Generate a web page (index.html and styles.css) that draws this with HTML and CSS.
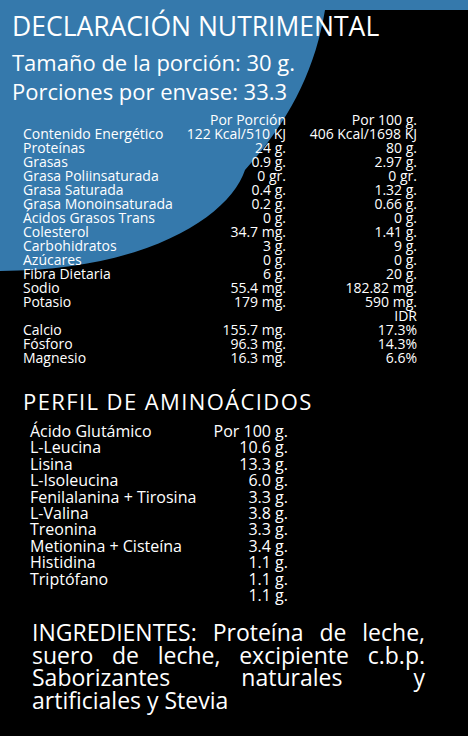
FILE: index.html
```html
<!DOCTYPE html>
<html lang="es">
<head>
  <meta charset="UTF-8">
  <meta name="viewport" content="width=device-width, initial-scale=1">
  <title>Declaración Nutrimental</title>
  <link rel="stylesheet" href="styles.css">
</head>
<body>
  <div class="label">
    <!-- blue corner shape behind the header -->
    <svg class="corner" width="468" height="280" viewBox="0 0 468 280">
      <path d="M0 0 H468 V10 H325 C315 70 290 120 245 170 C230 215 150 270 0 271 Z" fill="#3579ac"/>
    </svg>

    <div class="content">
      <h1>DECLARACIÓN NUTRIMENTAL</h1>
      <p class="serving">Tamaño de la porción: 30 g.</p>
      <p class="serving">Porciones por envase: 33.3</p>

      <div class="nutrients">
        <div class="row"><span></span><span>Por Porción</span><span>Por 100 g.</span></div>
        <div class="row"><span>Contenido Energético</span><span>122 Kcal/510 KJ</span><span>406 Kcal/1698 KJ</span></div>
        <div class="row"><span>Proteínas</span><span>24 g.</span><span>80 g.</span></div>
        <div class="row"><span>Grasas</span><span>0.9 g.</span><span>2.97 g.</span></div>
        <div class="row"><span>Grasa Poliinsaturada</span><span>0 gr.</span><span>0 gr.</span></div>
        <div class="row"><span>Grasa Saturada</span><span>0.4 g.</span><span>1.32 g.</span></div>
        <div class="row"><span>Grasa Monoinsaturada</span><span>0.2 g.</span><span>0.66 g.</span></div>
        <div class="row"><span>Ácidos Grasos Trans</span><span>0 g.</span><span>0 g.</span></div>
        <div class="row"><span>Colesterol</span><span>34.7 mg.</span><span>1.41 g.</span></div>
        <div class="row"><span>Carbohidratos</span><span>3 g.</span><span>9 g.</span></div>
        <div class="row"><span>Azúcares</span><span>0 g.</span><span>0 g.</span></div>
        <div class="row"><span>Fibra Dietaria</span><span>6 g.</span><span>20 g.</span></div>
        <div class="row"><span>Sodio</span><span>55.4 mg.</span><span>182.82 mg.</span></div>
        <div class="row"><span>Potasio</span><span>179 mg.</span><span>590 mg.</span></div>
        <div class="row"><span></span><span></span><span>IDR</span></div>
        <div class="row"><span>Calcio</span><span>155.7 mg.</span><span>17.3%</span></div>
        <div class="row"><span>Fósforo</span><span>96.3 mg.</span><span>14.3%</span></div>
        <div class="row"><span>Magnesio</span><span>16.3 mg.</span><span>6.6%</span></div>
      </div>

      <h2>PERFIL DE AMINOÁCIDOS</h2>
      <div class="amino">
        <div class="row"><span>Ácido Glutámico</span><span>Por 100 g.</span></div>
        <div class="row"><span>L-Leucina</span><span>10.6 g.</span></div>
        <div class="row"><span>Lisina</span><span>13.3 g.</span></div>
        <div class="row"><span>L-Isoleucina</span><span>6.0 g.</span></div>
        <div class="row"><span>Fenilalanina + Tirosina</span><span>3.3 g.</span></div>
        <div class="row"><span>L-Valina</span><span>3.8 g.</span></div>
        <div class="row"><span>Treonina</span><span>3.3 g.</span></div>
        <div class="row"><span>Metionina + Cisteína</span><span>3.4 g.</span></div>
        <div class="row"><span>Histidina</span><span>1.1 g.</span></div>
        <div class="row"><span>Triptófano</span><span>1.1 g.</span></div>
        <div class="row"><span></span><span>1.1 g.</span></div>
      </div>

      <p class="ingredients">
        <span class="line">INGREDIENTES: Proteína de leche,</span>
        <span class="line">suero de leche, excipiente c.b.p.</span>
        <span class="line">Saborizantes naturales y</span>
        <span class="line last">artificiales y Stevia</span>
      </p>
    </div>
  </div>
</body>
</html>
```

FILE: styles.css
```css
body {
  margin: 0;
  background: #000;
  font-family: 'Open Sans', 'DejaVu Sans', sans-serif;
  color: #fff;
}

.label {
  position: relative;
  width: 468px;
  height: 736px;
  overflow: hidden;
}

.corner {
  position: absolute;
  top: 0;
  left: 0;
}

.content {
  position: relative;
  padding-top: 11px;
}

h1 {
  margin: 0 0 7px 12px;
  font-size: 26.5px;
  font-weight: normal;
  line-height: 30px;
}

.serving {
  margin: 0 0 0 12px;
  font-size: 22px;
  line-height: 29px;
}

.nutrients {
  margin-top: 7px;
  padding-left: 23px;
  font-size: 14px;
  line-height: 14px;
}

.nutrients .row {
  display: grid;
  grid-template-columns: 150px 113px 131px;
}

.nutrients .row span + span {
  text-align: right;
}

h2 {
  margin: 24px 0 10px 23px;
  font-size: 22px;
  font-weight: normal;
  line-height: 24px;
  letter-spacing: 1.4px;
}

.amino {
  padding-left: 30px;
  font-size: 16px;
  line-height: 16.4px;
}

.amino .row {
  display: grid;
  grid-template-columns: 180px 78px;
}

.amino .row span + span {
  text-align: right;
}

.ingredients {
  width: 393px;
  margin: 18px 0 0 32px;
  font-size: 23px;
  line-height: 22.5px;
}

.ingredients .line {
  display: block;
  text-align: justify;
  text-align-last: justify;
}

.ingredients .line.last {
  text-align-last: left;
}
```
